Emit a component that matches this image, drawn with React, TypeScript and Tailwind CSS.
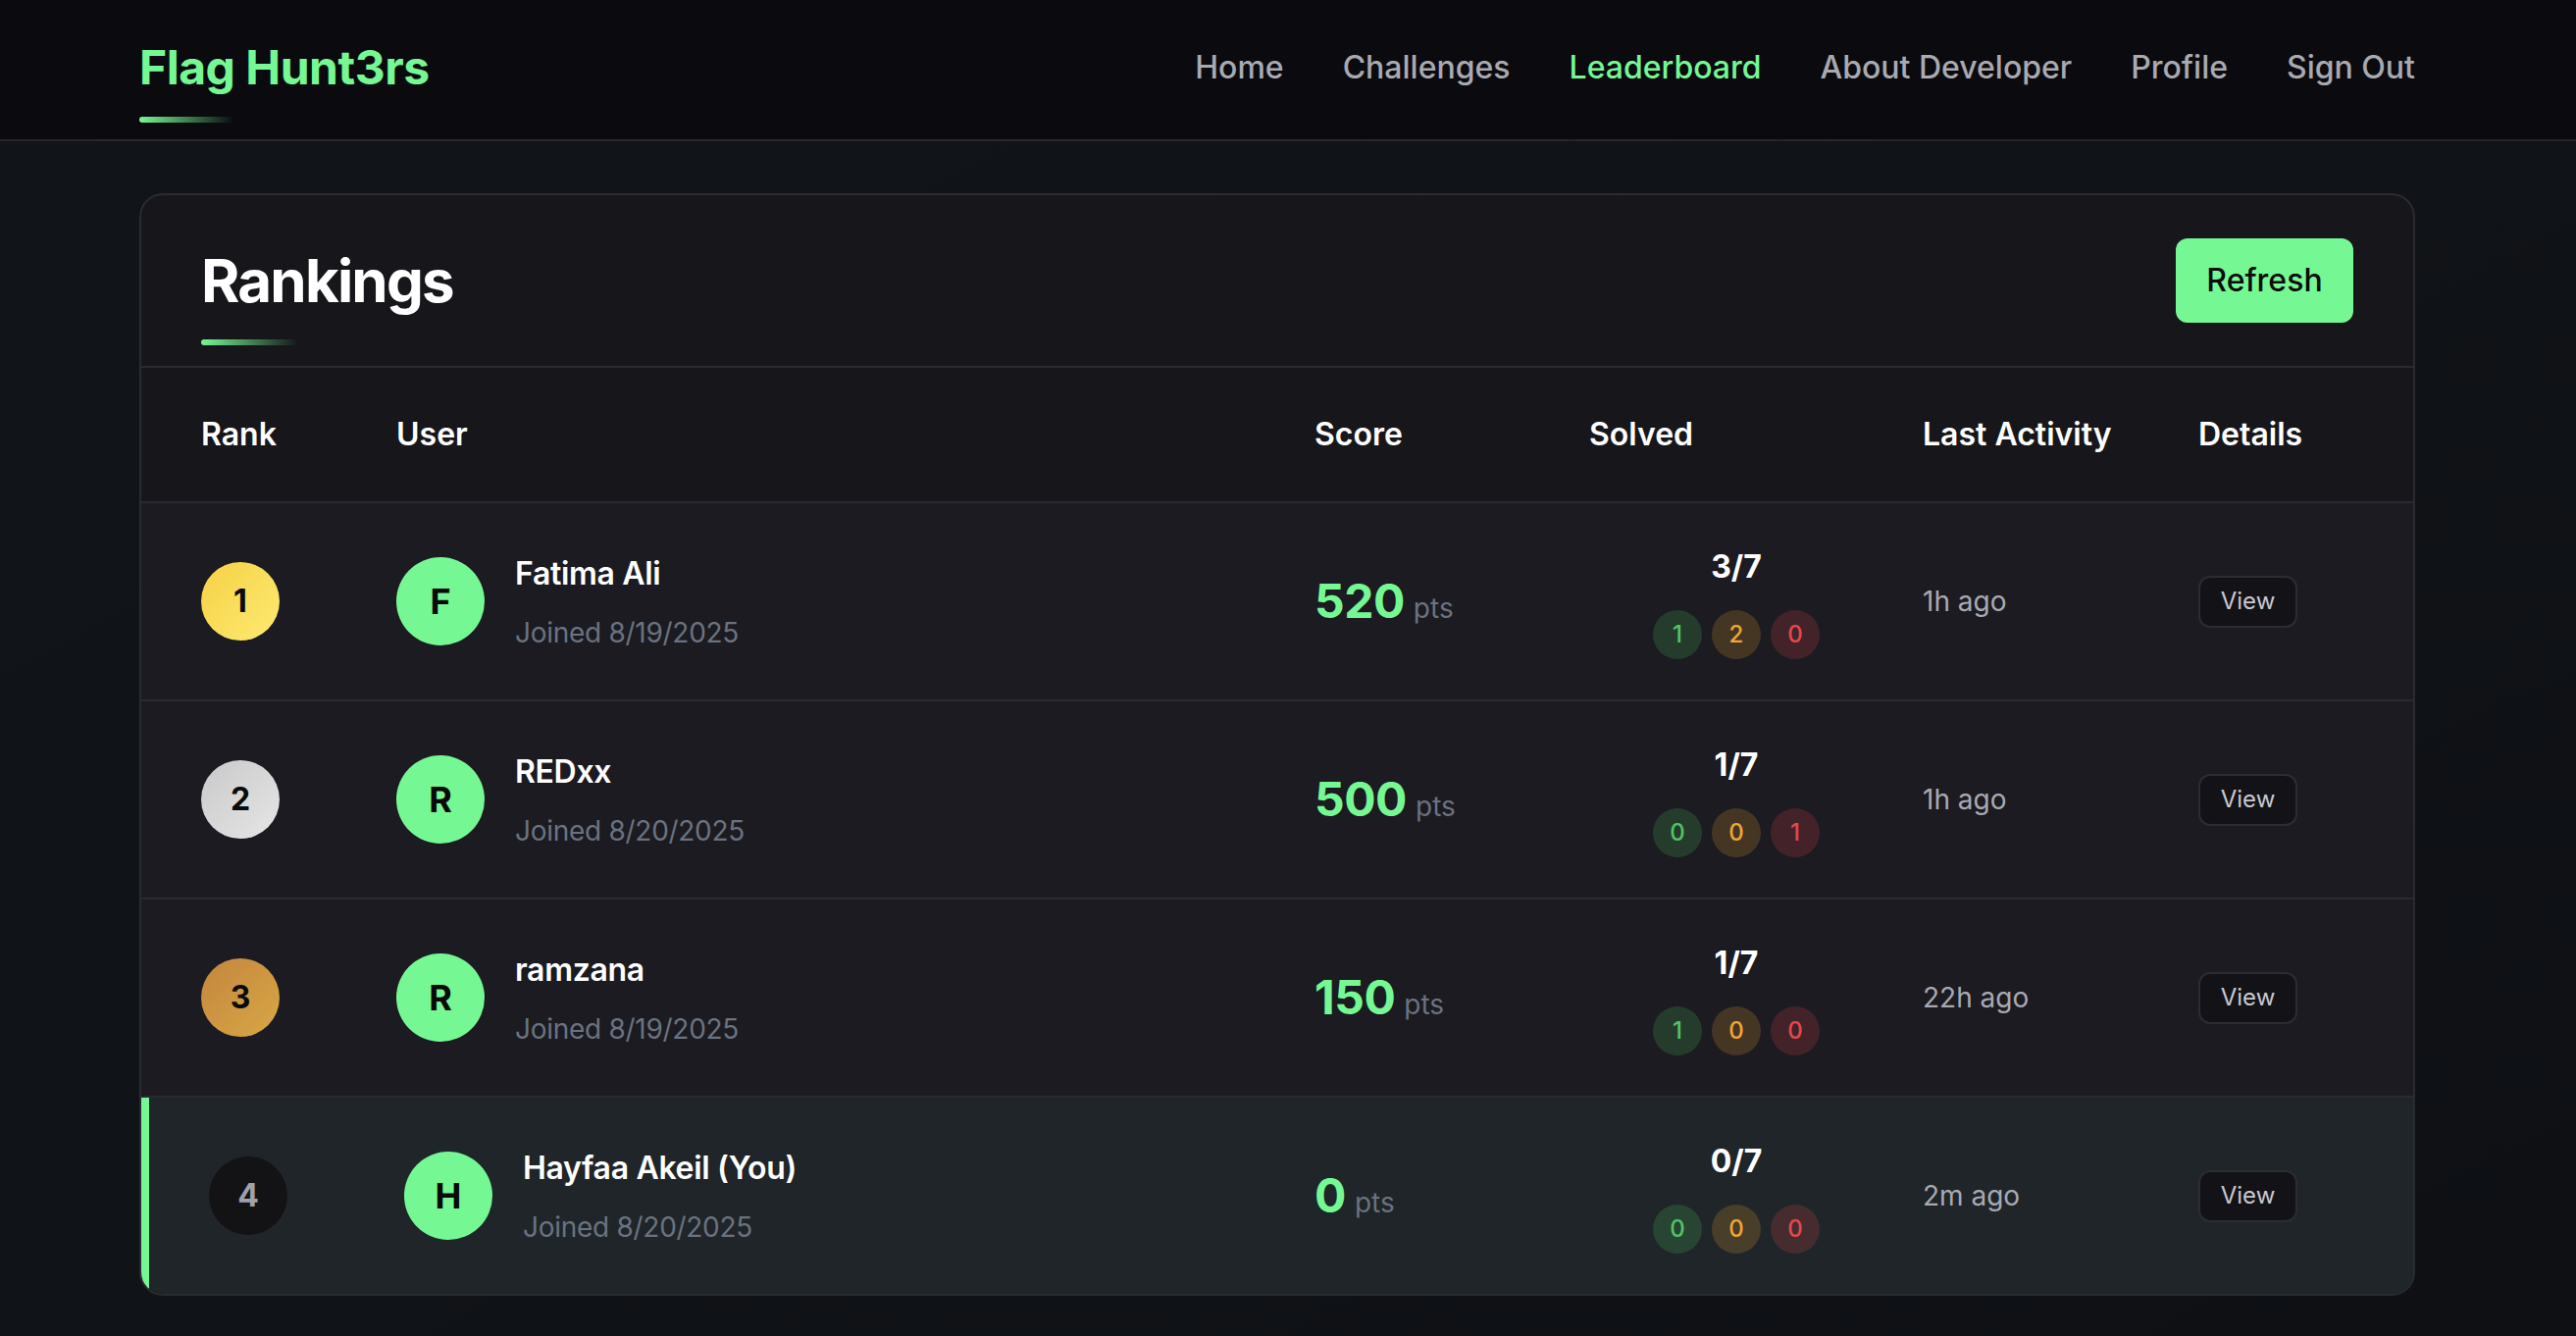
import React from 'react';

type Entry = {
  rank: number;
  name: string;
  joined: string;
  score: number;
  solved: string;
  easy: number;
  medium: number;
  hard: number;
  lastActive: string;
  isYou?: boolean;
};

const entries: Entry[] = [
  { rank: 1, name: 'Fatima Ali', joined: '8/19/2025', score: 520, solved: '3/7', easy: 1, medium: 2, hard: 0, lastActive: '1h ago' },
  { rank: 2, name: 'REDxx', joined: '8/20/2025', score: 500, solved: '1/7', easy: 0, medium: 0, hard: 1, lastActive: '1h ago' },
  { rank: 3, name: 'ramzana', joined: '8/19/2025', score: 150, solved: '1/7', easy: 1, medium: 0, hard: 0, lastActive: '22h ago' },
  { rank: 4, name: 'Hayfaa Akeil (You)', joined: '8/20/2025', score: 0, solved: '0/7', easy: 0, medium: 0, hard: 0, lastActive: '2m ago', isYou: true },
];

const navLinks = ['Home', 'Challenges', 'Leaderboard', 'About Developer', 'Profile', 'Sign Out'];

// full class strings so tailwind picks them up
const rankStyles: Record<number, string> = {
  1: 'bg-gradient-to-br from-[#f6d144] to-[#fdea70] text-[#0a0a0a]',
  2: 'bg-gradient-to-br from-[#c9c9c9] to-[#e6e6e6] text-[#0a0a0a]',
  3: 'bg-gradient-to-br from-[#c4863f] to-[#d8a744] text-[#0a0a0a]',
};

const cols = 'grid grid-cols-[199px_936px_280px_340px_281px_1fr] px-[61px]';

function RankBadge({ rank }: { rank: number }) {
  const style = rankStyles[rank] ?? 'bg-[#131316] text-[#a1a1aa]';
  return (
    <div className={`flex h-[80px] w-[80px] items-center justify-center rounded-full text-[32px] font-bold ${style}`}>
      {rank}
    </div>
  );
}

function Difficulty({ easy, medium, hard }: { easy: number; medium: number; hard: number }) {
  const base = 'flex h-[50px] w-[50px] items-center justify-center rounded-full text-[24px] font-medium';
  return (
    <div className="flex gap-[10px]">
      <span className={`${base} bg-[#4fc35f]/20 text-[#52c461]`}>{easy}</span>
      <span className={`${base} bg-[#f0a632]/20 text-[#f0a632]`}>{medium}</span>
      <span className={`${base} bg-[#e5484d]/20 text-[#e5484d]`}>{hard}</span>
    </div>
  );
}

function Row({ entry }: { entry: Entry }) {
  const rowBg = entry.isYou ? 'bg-[#1f2528] shadow-[inset_8px_0_0_#75f894]' : 'bg-[#1b1b21]';
  const shift = entry.isYou ? 'pl-[8px]' : '';
  return (
    <div className={`${cols} h-[202px] items-center border-t-2 border-[#2a2a33] ${rowBg}`}>
      <div className={shift}>
        <RankBadge rank={entry.rank} />
      </div>
      <div className={`flex items-center gap-[31px] ${shift}`}>
        <div className="flex h-[90px] w-[90px] items-center justify-center rounded-full bg-[#75f894] text-[36px] font-bold text-[#0a0a0a]">
          {entry.name.charAt(0).toUpperCase()}
        </div>
        <div className="flex flex-col">
          <span className="text-[32px] font-semibold leading-[48px] tracking-[-0.01em] text-white">{entry.name}</span>
          <span className="mt-[16px] text-[28px] leading-[40px] tracking-[-0.01em] text-[#6b7280]">Joined {entry.joined}</span>
        </div>
      </div>
      <div className="flex items-baseline">
        <span className="text-[48px] font-bold leading-[56px] tracking-[-0.01em] text-[#75f894]">{entry.score}</span>
        <span className="ml-[9px] text-[28px] text-[#6b7280]">pts</span>
      </div>
      <div className="flex w-[300px] flex-col items-center">
        <span className="mb-[20px] text-[32px] font-bold leading-[48px] text-white">{entry.solved}</span>
        <Difficulty easy={entry.easy} medium={entry.medium} hard={entry.hard} />
      </div>
      <div className="text-[28px] text-[#a9a9b2]">{entry.lastActive}</div>
      <div>
        <button
          type="button"
          className="flex h-[53px] w-[101px] items-center justify-center rounded-[12px] border-2 border-[#2c2c34] bg-[#131317] text-[24px] text-[#c8c8d0]"
        >
          View
        </button>
      </div>
    </div>
  );
}

export default function App() {
  return (
    <div className="min-h-screen bg-gradient-to-br from-[#111519] via-[#101317] to-[#0e1014] font-['Inter',sans-serif]">
      <nav className="flex h-[144px] items-center justify-between border-b-2 border-[#25252e] bg-[#0b0b0f] pb-[5px] pl-[142px] pr-[164px]">
        <div className="relative">
          <span className="text-[48px] font-bold leading-[48px] tracking-[-0.01em] text-[#75f894]">Flag Hunt3rs</span>
          <div className="absolute left-0 top-[74px] h-[6px] w-[96px] rounded-full bg-gradient-to-r from-[#75f894] to-transparent" />
        </div>
        <div className="flex items-center gap-[60px]">
          {navLinks.map((link) => (
            <a
              key={link}
              href="#"
              className={`text-[32px] font-medium ${link === 'Leaderboard' ? 'text-[#75f894]' : 'text-[#a9a9b1]'}`}
            >
              {link}
            </a>
          ))}
        </div>
      </nav>

      <main className="pb-[41px] pl-[142px] pr-[164px] pt-[53px]">
        <div className="overflow-hidden rounded-[24px] border-2 border-[#2a2a33] bg-[#17171b]">
          <div className="flex h-[176px] items-center justify-between border-b-2 border-[#2a2a33] px-[61px]">
            <div className="relative">
              <h1 className="text-[60px] font-bold leading-[72px] tracking-[-0.03em] text-white">Rankings</h1>
              <div className="absolute left-0 top-[96px] h-[6px] w-[98px] rounded-full bg-gradient-to-r from-[#75f894] to-transparent" />
            </div>
            <button
              type="button"
              className="flex h-[86px] w-[181px] items-center justify-center rounded-[12px] bg-[#75f894] text-[32px] font-medium text-[#0b0b0b]"
            >
              Refresh
            </button>
          </div>

          <div className={`${cols} h-[136px] items-center text-[32px] font-semibold text-white`}>
            <div>Rank</div>
            <div>User</div>
            <div>Score</div>
            <div>Solved</div>
            <div>Last Activity</div>
            <div>Details</div>
          </div>

          {entries.map((entry) => (
            <Row key={entry.rank} entry={entry} />
          ))}
        </div>
      </main>
    </div>
  );
}
